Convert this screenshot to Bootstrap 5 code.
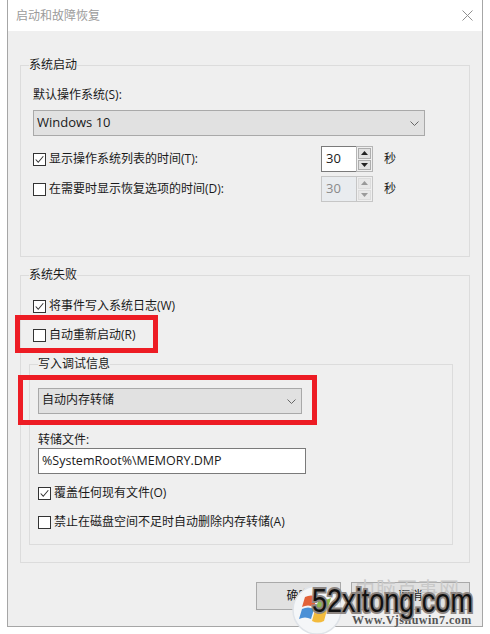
<!DOCTYPE html>
<html lang="zh-CN">
<head>
    <meta charset="UTF-8">
    <meta name="viewport" content="width=device-width, initial-scale=1.0">
    <title>启动和故障恢复</title>
    <link href="https://cdn.jsdelivr.net/npm/bootstrap@5.3.0/dist/css/bootstrap.min.css" rel="stylesheet">
    <script src="https://cdn.jsdelivr.net/npm/bootstrap@5.3.0/dist/js/bootstrap.bundle.min.js"></script>
    <style>
        html, body { height: 100%; }
        body {
            background: #fff;
            color: #1a1a1a;
            font-family: "Open Sans", "Noto Sans CJK SC", sans-serif;
            font-size: 12px;
            line-height: 16px;
            position: relative;
            overflow: hidden;
        }
        .dlg {
            width: 476px;
            height: 627px;
            margin-left: 7px;
            border: 1px solid #a6a6a6;
            border-top: 0;
            background: #efefef;
        }
        .dlg-title {
            height: 31px;
            background: #fff;
            color: #9b9b9b;
            padding: 8px 9px 0 8px;
        }
        .dlg-x { margin-top: 2px; }
        .dlg-body { padding: 26px 12px 0 12px; }
        .grp {
            border: 1px solid #dcdcdc;
            padding: 0 12px;
            min-width: 0;
            margin: 0;
        }
        .grp legend {
            float: none;
            width: auto;
            font-size: 12px;
            line-height: 16px;
            margin: 0 0 0 -4px;
            padding: 0;
            background: #efefef;
            color: #1a1a1a;
        }
        .grp-boot { height: 200px; margin-bottom: 10px; }
        .grp-fail { height: 296px; }
        .grp-debug { height: 189px; margin: 13px 0 0 -4px; width: 424px; padding: 0 8px; }
        .grp-debug legend { margin-left: 0; }
        .win-select.form-select {
            height: 26px;
            border: 1px solid #a9a9a9;
            border-radius: 0;
            background-color: #e1e1e1;
            background-image: url("data:image/svg+xml,%3csvg xmlns='http://www.w3.org/2000/svg' viewBox='0 0 9 5'%3e%3cpath fill='none' stroke='%23666' d='M.5.5l4 4 4-4'/%3e%3c/svg%3e");
            color: #1a1a1a;
            font-size: 12px;
            line-height: 16px;
            padding: 0 20px 2px 3px;
            background-position: right 5px center;
            background-size: 9px 5px;
            box-shadow: none;
        }
        .boot-label { margin-top: 14px; }
        .sel-os { width: 392px; margin-top: 7px; font-size: 13px !important; }
        .sel-dump { width: 264px; margin-top: 16px; }
        .win-check { display: flex; align-items: center; height: 16px; margin: 0; }
        .win-check .form-check-input {
            width: 13px;
            height: 13px;
            margin: 0 3px 0 0;
            border: 1px solid #333;
            border-radius: 0;
            background-color: #fff;
            flex: none;
            box-shadow: none;
        }
        .win-check .form-check-input:checked {
            background-color: #fff;
            border-color: #333;
            background-image: url("data:image/svg+xml,%3csvg xmlns='http://www.w3.org/2000/svg' viewBox='0 0 13 13'%3e%3cpath fill='none' stroke='%23333' stroke-width='1.2' d='M2 6.5l3 3.2 6-7'/%3e%3c/svg%3e");
            background-size: 100%;
        }
        .time-row { height: 26px; margin-top: 10px; }
        .time-row + .time-row { margin-top: 4px; }
        .time-row .win-check { width: 288px; }
        .spin { width: 52px; height: 26px; border: 1px solid #7a7a7a; background: #fff; }
        .spin input {
            flex: 1;
            min-width: 0;
            height: 100%;
            border: 0;
            border-radius: 0;
            padding: 0 0 2px 4px;
            font-size: 13px;
            color: #1a1a1a;
            background: transparent;
            box-shadow: none;
        }
        .spin-btns { width: 17px; padding: 1px; gap: 1px; background: #efefef; margin: -1px -1px -1px 0; border: 1px solid #b5b5b5; }
        .spin-btns span {
            flex: 1;
            background: #e1e1e1;
            border: 1px solid #adadad;
            display: flex;
            align-items: center;
            justify-content: center;
        }
        .spin-off { border-color: #c6c6c6; background: #efefef; }
        .spin-off input { color: #8a8a8a; }
        .spin-off .spin-btns { border-color: #c6c6c6; }
        .spin-off .spin-btns span { border-color: #dcdcdc; background: #e8e8e8; }
        .unit { margin-left: 11px; }
        .log-row { margin-top: 15px; }
        .restart-row { margin-top: 13px; }
        .dump-label { margin-top: 18px; }
        .over-row { margin-top: 11px; }
        .nodel-row { margin-top: 13px; }
        .file-input.form-control {
            width: 268px;
            height: 26px;
            border: 1px solid #7a7a7a;
            border-radius: 0;
            padding: 0 3px 2px 3px;
            font-size: 12.5px;
            color: #1a1a1a;
            box-shadow: none;
        }
        .foot-btns { margin: 19px 0 0 236px; gap: 10px; }
        .win-btn {
            height: 28px;
            border: 1px solid #a9a9a9;
            border-radius: 0;
            background: #e1e1e1;
            color: #1a1a1a;
            font-size: 12px;
            line-height: 16px;
            padding: 0;
        }
        .btn-ok { width: 86px; }
        .btn-cancel { width: 120px; }
        .red-mark { position: absolute; border: 5px solid #ed1c24; pointer-events: none; }
        .mark-restart { left: 15px; top: 315px; width: 143px; height: 38px; }
        .mark-dump { left: 18px; top: 375px; width: 299px; height: 50px; }
        .wm-logo { position: absolute; left: 292px; top: 585px; width: 50px; height: 50px; }
        .wm-cn {
            position: absolute;
            left: 355px;
            top: 578px;
            font-size: 20px;
            line-height: 24px;
            color: #c9c9c9;
            letter-spacing: 1px;
            white-space: nowrap;
        }
        .wm-url {
            position: absolute;
            left: 352px;
            top: 613px;
            font-family: "Liberation Serif", serif;
            font-size: 12px;
            font-weight: 700;
            line-height: 14px;
            color: #555;
            letter-spacing: .5px;
            white-space: nowrap;
        }
        .wm-main {
            position: absolute;
            left: 312px;
            top: 582px;
            font-family: "Liberation Sans", sans-serif;
            font-size: 33px;
            line-height: 38px;
            color: #111;
            -webkit-text-stroke: 4px #8d8682;
            paint-order: stroke fill;
            transform: scaleX(.82);
            transform-origin: left center;
            white-space: nowrap;
        }
    </style>
</head>
<body>
    <div class="dlg">
        <div class="dlg-title d-flex justify-content-between">
            <span>启动和故障恢复</span>
            <svg class="dlg-x" width="11" height="11" viewBox="0 0 11 11"><path d="M.5.5l10 10M10.5.5l-10 10" stroke="#8f8f8f" fill="none"/></svg>
        </div>
        <div class="dlg-body">
            <fieldset class="grp grp-boot">
                <legend>系统启动</legend>
                <div class="boot-label">默认操作系统(S):</div>
                <select class="form-select win-select sel-os"><option>Windows 10</option></select>
                <div class="time-row d-flex align-items-center">
                    <label class="win-check"><input class="form-check-input" type="checkbox" checked>显示操作系统列表的时间(T):</label>
                    <div class="spin d-flex">
                        <input class="form-control" value="30">
                        <div class="spin-btns d-flex flex-column">
                            <span><svg width="7" height="4"><path d="M3.5 0L7 4H0z" fill="#222"/></svg></span>
                            <span><svg width="7" height="4"><path d="M0 0h7L3.5 4z" fill="#222"/></svg></span>
                        </div>
                    </div>
                    <span class="unit">秒</span>
                </div>
                <div class="time-row d-flex align-items-center">
                    <label class="win-check"><input class="form-check-input" type="checkbox">在需要时显示恢复选项的时间(D):</label>
                    <div class="spin spin-off d-flex">
                        <input class="form-control" value="30" disabled>
                        <div class="spin-btns d-flex flex-column">
                            <span><svg width="7" height="4"><path d="M3.5 0L7 4H0z" fill="#9a9a9a"/></svg></span>
                            <span><svg width="7" height="4"><path d="M0 0h7L3.5 4z" fill="#9a9a9a"/></svg></span>
                        </div>
                    </div>
                    <span class="unit">秒</span>
                </div>
            </fieldset>
            <fieldset class="grp grp-fail">
                <legend>系统失败</legend>
                <label class="win-check log-row">
                    <input class="form-check-input" type="checkbox" checked>将事件写入系统日志(W)</label>
                <label class="win-check restart-row">
                    <input class="form-check-input" type="checkbox">自动重新启动(R)</label>
                <fieldset class="grp grp-debug">
                    <legend>写入调试信息</legend>
                    <select class="form-select win-select sel-dump"><option>自动内存转储</option></select>
                    <div class="dump-label">转储文件:</div>
                    <input class="form-control file-input" value="%SystemRoot%\MEMORY.DMP">
                    <label class="win-check over-row">
                        <input class="form-check-input" type="checkbox" checked>覆盖任何现有文件(O)</label>
                    <label class="win-check nodel-row">
                        <input class="form-check-input" type="checkbox">禁止在磁盘空间不足时自动删除内存转储(A)</label>
                </fieldset>
            </fieldset>
            <div class="foot-btns d-flex">
                <button class="btn win-btn btn-ok">确定</button>
                <button class="btn win-btn btn-cancel">取消</button>
            </div>
        </div>
    </div>

    <div class="red-mark mark-restart"></div>
    <div class="red-mark mark-dump"></div>

    <svg class="wm-logo" viewBox="0 0 50 50">
        <circle cx="25" cy="25" r="24" fill="#f4f6f8" stroke="#dfe3e8" stroke-width="1.5"/>
        <path d="M10 24q6-3 12 0l-3 10q-6-3-12 0z" fill="#4a90d6"/>
        <path d="M13 12q6-3 12 0l-3 10q-6-3-12 0z" fill="#e2633a"/>
        <path d="M27 13q6 3 12 0l-3 10q-6 3-12 0z" fill="#8cba4a"/>
        <path d="M23 25q6 3 12 0l-3 11q-6 3-12 0z" fill="#f3bb3d"/>
    </svg>
    <div class="wm-cn">内脑百事网</div>
    <div class="wm-url">Www.Vjshuwin7.com</div>
    <div class="wm-main">52xitong.com</div>
</body>
</html>
